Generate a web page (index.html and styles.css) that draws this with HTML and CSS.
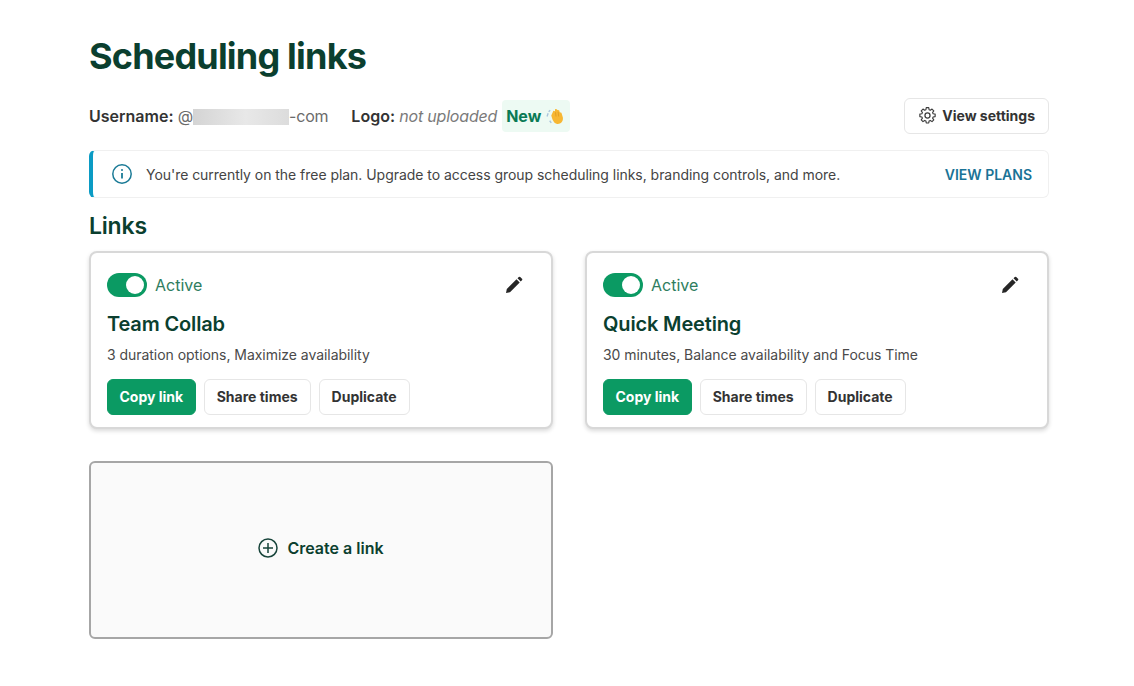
FILE: index.html
```html
<!DOCTYPE html>
<html lang="en">
<head>
  <meta charset="UTF-8">
  <meta name="viewport" content="width=device-width, initial-scale=1.0">
  <title>Scheduling links</title>
  <link rel="stylesheet" href="styles.css">
</head>
<body>

  <div class="container">
    <h1 class="page-title">Scheduling links</h1>

    <div class="info-row">
      <div class="info-left">
        <span class="info-item"><b>Username:</b> @<span class="blurred"></span>-com</span>
        <span class="info-item logo-item"><b>Logo:</b> <i>not uploaded</i></span>
        <span class="new-badge">New
          <svg class="wave" viewBox="0 0 18 18" width="19" height="19">
            <path d="M2 6 L1 9 M4 3 L2.5 4.5 M3.5 13 L5 15" stroke="#a9c4dc" stroke-width="1.3" fill="none"/>
            <path d="M5 8 L7 3.5 L8.5 4 L8.6 2 L10.2 2.2 L10.8 2.8 L12.5 3 L13 5 L14.6 5.4 L16 10 C16.5 14 13.5 16.5 10.5 16 C7.5 15.5 6 12 5 8 Z" fill="#f7b733"/>
            <path d="M9 5 L9.5 9 M11.5 4.5 L12 9" stroke="#e09a1f" stroke-width=".8" fill="none"/>
          </svg>
        </span>
      </div>
      <button class="btn settings-btn">
        <svg class="gear" viewBox="0 0 24 24" width="19" height="19" fill="none" stroke="#3d3d3d" stroke-width="1.6" stroke-linejoin="round">
          <path d="M10.3 2.5h3.4l.5 2.8 1.7.7 2.3-1.6 2.4 2.4-1.6 2.3.7 1.7 2.8.5v3.4l-2.8.5-.7 1.7 1.6 2.3-2.4 2.4-2.3-1.6-1.7.7-.5 2.8h-3.4l-.5-2.8-1.7-.7-2.3 1.6-2.4-2.4 1.6-2.3-.7-1.7-2.8-.5v-3.4l2.8-.5.7-1.7-1.6-2.3 2.4-2.4 2.3 1.6 1.7-.7z" transform="translate(12 12) scale(.92) translate(-12 -13.2)"/>
          <circle cx="12" cy="12" r="3.2"/>
        </svg>
        View settings
      </button>
    </div>

    <div class="banner">
      <div class="banner-text">
        <svg viewBox="0 0 22 22" width="22" height="22" fill="none" stroke="#1a7a96" stroke-width="1.5">
          <circle cx="11" cy="11" r="9.2"/>
          <path d="M11 10v5.5" stroke-width="1.8"/>
          <circle cx="11" cy="7" r="1" fill="#1a7a96" stroke="none"/>
        </svg>
        <span>You're currently on the free plan. Upgrade to access group scheduling links, branding controls, and more.</span>
      </div>
      <a class="banner-link">VIEW PLANS</a>
    </div>

    <h2 class="section-heading">Links</h2>

    <div class="cards">
      <div class="card">
        <div class="card-top">
          <div class="status">
            <span class="toggle"><span class="knob"></span></span>
            <span class="status-label">Active</span>
          </div>
          <svg class="pencil" viewBox="0 0 18 18" width="18" height="18"><path d="M1 17 L1.8 13 L11.5 3.3 L14.7 6.5 L5 16.2 Z M12.5 2.3 L13.8 1 A1 1 0 0 1 15.2 1 L17 2.8 A1 1 0 0 1 17 4.2 L15.7 5.5 Z" fill="#262626"/></svg>
        </div>
        <div class="card-title">Team Collab</div>
        <div class="card-desc">3 duration options, Maximize availability</div>
        <div class="card-actions">
          <button class="btn primary">Copy link</button>
          <button class="btn">Share times</button>
          <button class="btn">Duplicate</button>
        </div>
      </div>

      <div class="card">
        <div class="card-top">
          <div class="status">
            <span class="toggle"><span class="knob"></span></span>
            <span class="status-label">Active</span>
          </div>
          <svg class="pencil" viewBox="0 0 18 18" width="18" height="18"><path d="M1 17 L1.8 13 L11.5 3.3 L14.7 6.5 L5 16.2 Z M12.5 2.3 L13.8 1 A1 1 0 0 1 15.2 1 L17 2.8 A1 1 0 0 1 17 4.2 L15.7 5.5 Z" fill="#262626"/></svg>
        </div>
        <div class="card-title">Quick Meeting</div>
        <div class="card-desc">30 minutes, Balance availability and Focus Time</div>
        <div class="card-actions">
          <button class="btn primary">Copy link</button>
          <button class="btn">Share times</button>
          <button class="btn">Duplicate</button>
        </div>
      </div>

      <div class="create-card">
        <svg viewBox="0 0 20 20" width="20" height="20" fill="none" stroke="#17443a" stroke-width="1.5">
          <circle cx="10" cy="10" r="9"/>
          <path d="M10 5v10M5 10h10"/>
        </svg>
        <span>Create a link</span>
      </div>
    </div>
  </div>

</body>
</html>
```

FILE: styles.css
```css
body {
  font-family: 'Inter', 'Liberation Sans', sans-serif;
  background-color: #fff;
  color: #333;
  margin: 0;
}

.container {
  width: 960px;
  margin-left: 89px;
  padding-top: 34px;
}

.page-title {
  font-size: 36px;
  line-height: 44px;
  font-weight: 700;
  letter-spacing: -0.8px;
  color: #0b3f2f;
  margin: 0;
}

.info-row {
  display: flex;
  align-items: center;
  justify-content: space-between;
  margin-top: 20px;
  height: 36px;
}

.info-left {
  display: flex;
  align-items: center;
  font-size: 16px;
  color: #6b6b6b;
}

.info-item {
  letter-spacing: -0.2px;
}

.info-item b {
  font-weight: 600;
  letter-spacing: 0;
  color: #333;
}

.info-item i {
  color: #7a7a7a;
}

.blurred {
  display: inline-block;
  width: 96px;
  height: 16px;
  vertical-align: -3px;
  background: linear-gradient(90deg, #d4d4d4, #e8e8e8 55%, #dcdcdc);
}

.logo-item {
  margin-left: 23px;
}

.new-badge {
  display: flex;
  align-items: center;
  gap: 5px;
  height: 32px;
  margin-left: 5px;
  padding: 0 5px 0 4px;
  border-radius: 4px;
  background-color: #edfaf3;
  color: #0a7a55;
  font-weight: 700;
}

.btn {
  font-family: inherit;
  font-size: 14px;
  font-weight: 700;
  color: #333;
  height: 36px;
  padding: 0 12px 2px;
  background-color: #fff;
  border: 1px solid #e6e6e6;
  border-radius: 6px;
}

.settings-btn {
  display: flex;
  align-items: center;
  gap: 5px;
  padding: 0 13px 2px 13px;
}

.banner {
  display: flex;
  align-items: center;
  justify-content: space-between;
  height: 48px;
  box-sizing: border-box;
  margin-top: 16px;
  padding: 0 16px 0 18px;
  border: 1px solid #f0f0f0;
  border-left: 4px solid #0b9bc4;
  border-radius: 6px;
  font-size: 14px;
}

.banner-text {
  display: flex;
  align-items: center;
  gap: 13px;
  letter-spacing: -0.04px;
  color: #444;
}

.banner-link {
  font-weight: 600;
  color: #1a7396;
}

.section-heading {
  font-size: 23px;
  line-height: 28px;
  font-weight: 600;
  letter-spacing: -0.2px;
  color: #0b3f2f;
  margin: 14px 0 11px;
}

.cards {
  display: grid;
  grid-template-columns: 464px 464px;
  gap: 32px;
}

.card {
  box-sizing: border-box;
  height: 178px;
  padding: 20px 16px 0;
  background-color: #fff;
  border: 2px solid #d8d8d8;
  border-radius: 8px;
  box-shadow: 0 2px 4px rgba(0, 0, 0, 0.15);
}

.card-top {
  display: flex;
  align-items: center;
  justify-content: space-between;
  height: 24px;
}

.pencil {
  margin-right: 12px;
}

.status {
  display: flex;
  align-items: center;
  gap: 8px;
}

.toggle {
  display: flex;
  align-items: center;
  justify-content: flex-end;
  width: 40px;
  height: 24px;
  padding-right: 3px;
  box-sizing: border-box;
  background-color: #0b9a63;
  border-radius: 12px;
}

.knob {
  width: 18px;
  height: 18px;
  background-color: #fff;
  border-radius: 50%;
}

.status-label {
  font-size: 16px;
  color: #2e7d5e;
}

.card-title {
  font-size: 20px;
  line-height: 24px;
  font-weight: 600;
  letter-spacing: -0.15px;
  color: #0b3f2f;
  margin-top: 15px;
}

.card-desc {
  font-size: 14px;
  line-height: 20px;
  letter-spacing: -0.04px;
  color: #4a4a4a;
  margin-top: 9px;
}

.card-actions {
  display: flex;
  gap: 8px;
  margin-top: 14px;
}

.btn.primary {
  padding: 0 11.5px 2px;
  background-color: #0b9a63;
  border-color: #0b9a63;
  color: #fff;
}

.create-card {
  box-sizing: border-box;
  height: 178px;
  padding-bottom: 4px;
  display: flex;
  align-items: center;
  justify-content: center;
  gap: 9px;
  background-color: #fafafa;
  border: 2px solid #a6a6a6;
  border-radius: 6px;
  font-size: 16px;
  font-weight: 600;
  color: #0b3f2f;
}
```
